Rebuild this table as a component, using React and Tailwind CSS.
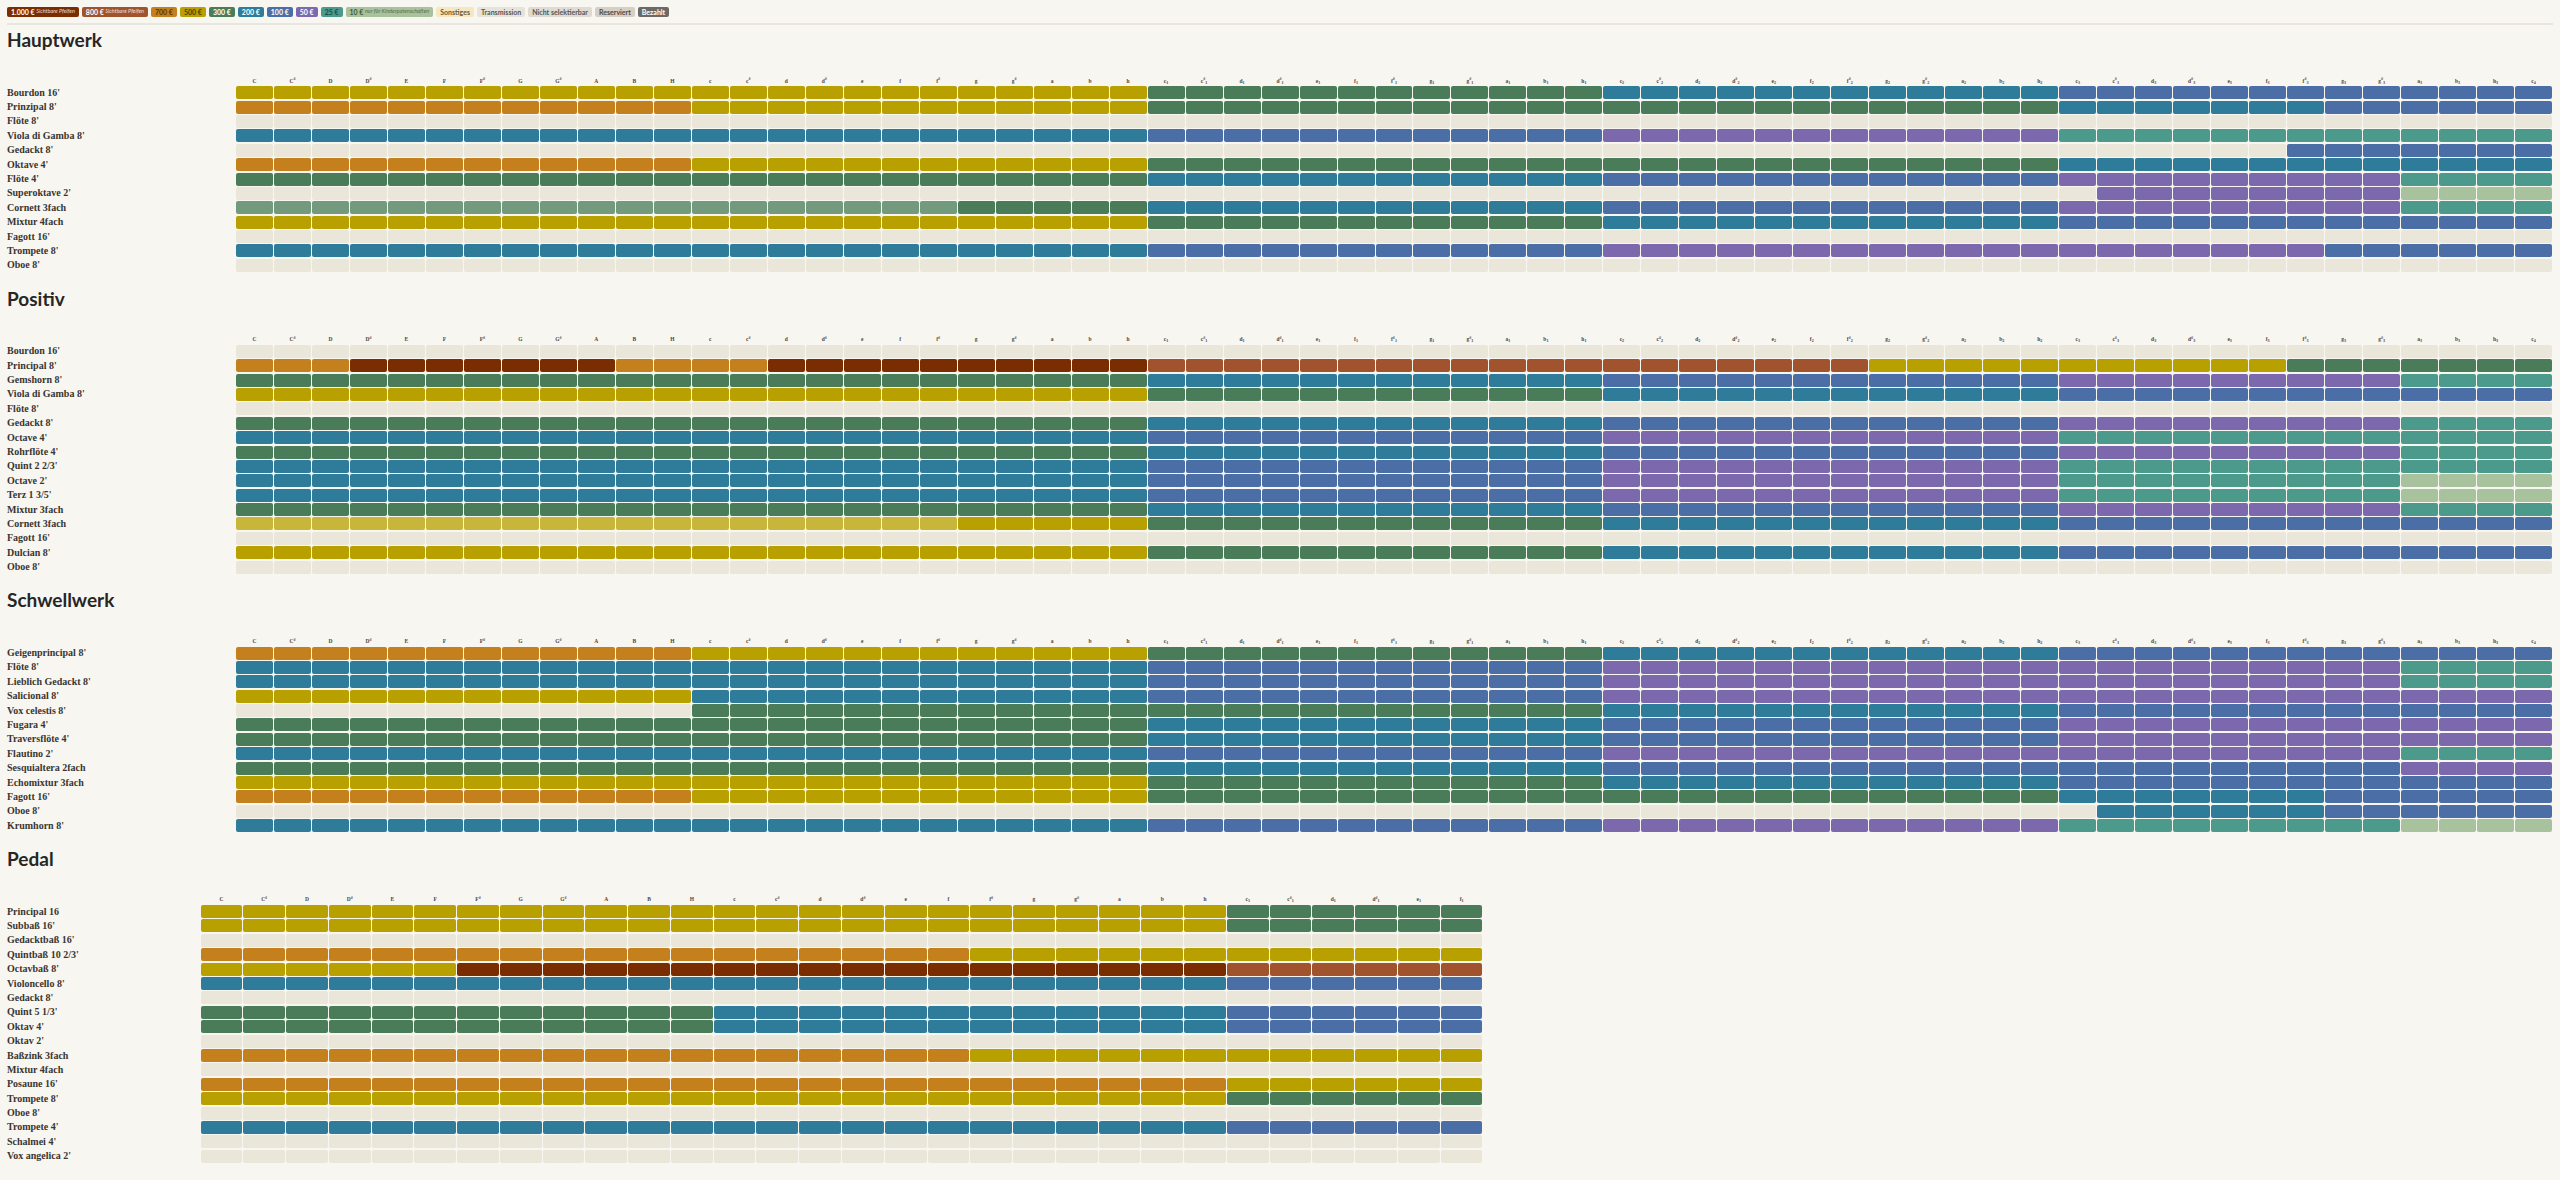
import React from "react";

// farben der patenschaften
const COLORS = {
  x: "bg-[#7b2d02]", // 1.000 €
  r: "bg-[#a0532d]", // 800 €
  o: "bg-[#c4801c]", // 700 €
  m: "bg-[#b8a000]", // 500 €
  g: "bg-[#4a7c59]", // 300 €
  t: "bg-[#2e7b9a]", // 200 €
  b: "bg-[#4a6ea5]", // 100 €
  p: "bg-[#7b68ad]", // 50 €
  q: "bg-[#4c9a8b]", // 25 €
  l: "bg-[#a8c29e]", // 10 €
  f: "bg-[#739a7c]", // 300 € reserviert
  y: "bg-[#c8b63b]", // 500 € reserviert
  e: "bg-[#eae6d9]", // nicht selektierbar
};

const LEGEND = [
  { amount: "1.000 €", note: "Sichtbare Pfeifen", cls: "bg-[#7b2d02] text-white" },
  { amount: "800 €", note: "Sichtbare Pfeifen", cls: "bg-[#a0532d] text-white" },
  { amount: "700 €", cls: "bg-[#c4801c] text-[#5a3608]" },
  { amount: "500 €", cls: "bg-[#b8a000] text-[#4a3f00]" },
  { amount: "300 €", cls: "bg-[#4a7c59] text-white" },
  { amount: "200 €", cls: "bg-[#2e7b9a] text-white" },
  { amount: "100 €", cls: "bg-[#4a6ea5] text-white" },
  { amount: "50 €", cls: "bg-[#7b68ad] text-white" },
  { amount: "25 €", cls: "bg-[#4c9a8b] text-[#1d4a40]" },
  { amount: "10 €", note: "nur für Kinderpatenschaften", cls: "bg-[#a8c29e] text-[#3e5a38]" },
  { amount: "Sonstiges", cls: "bg-[#f6e7c1] text-[#6b5a30]" },
  { amount: "Transmission", cls: "bg-[#e7e3da] text-[#5a564e]" },
  { amount: "Nicht selektierbar", cls: "bg-[#dfdbd2] text-[#5a564e]" },
  { amount: "Reserviert", cls: "bg-[#d5cfc6] text-[#4e4a44]" },
  { amount: "Bezahlt", cls: "bg-[#6d6a66] text-white" },
];

const NOTES = ["c", "c#", "d", "d#", "e", "f", "f#", "g", "g#", "a", "b", "h"];

function keyLabels(count) {
  const out = [];
  for (let i = 0; i < count; i++) {
    const oct = Math.floor(i / 12);
    const n = NOTES[i % 12];
    const base = oct === 0 ? n[0].toUpperCase() : n[0];
    out.push({ base, sharp: n.length > 1, sub: oct >= 2 ? oct - 1 : null });
  }
  return out;
}

// "o12 m12 g24" -> ["o", "o", ...]
function cells(runs) {
  const out = [];
  runs.split(" ").forEach((r) => {
    const c = r[0];
    const n = parseInt(r.slice(1), 10);
    for (let i = 0; i < n; i++) out.push(c);
  });
  return out;
}

const HAUPTWERK = [
  ["Bourdon 16'", "m24 g12 t12 b13"],
  ["Prinzipal 8'", "o12 m12 g24 t7 b6"],
  ["Flöte 8'", "e61"],
  ["Viola di Gamba 8'", "t24 b12 p12 q13"],
  ["Gedackt 8'", "e54 b7"],
  ["Oktave 4'", "o12 m12 g24 t13"],
  ["Flöte 4'", "g24 t12 b12 p9 q4"],
  ["Superoktave 2'", "e49 p8 l4"],
  ["Cornett 3fach", "f19 g5 t12 b12 p9 q4"],
  ["Mixtur 4fach", "m24 g12 t12 b13"],
  ["Fagott 16'", "e61"],
  ["Trompete 8'", "t24 b12 p19 b6"],
  ["Oboe 8'", "e61"],
];

const POSITIV = [
  ["Bourdon 16'", "e61"],
  ["Principal 8'", "o3 x7 o4 x10 r19 m11 g7"],
  ["Gemshorn 8'", "g24 t12 b12 p9 q4"],
  ["Viola di Gamba 8'", "m24 g12 t12 b13"],
  ["Flöte 8'", "e61"],
  ["Gedackt 8'", "g24 t12 b12 p9 q4"],
  ["Octave 4'", "t24 b12 p12 q13"],
  ["Rohrflöte 4'", "g24 t12 b12 p9 q4"],
  ["Quint 2 2/3'", "t24 b12 p12 q13"],
  ["Octave 2'", "t24 b12 p12 q9 l4"],
  ["Terz 1 3/5'", "t24 b12 p12 q9 l4"],
  ["Mixtur 3fach", "g24 t12 b12 p9 q4"],
  ["Cornett 3fach", "y19 m5 g12 t12 b13"],
  ["Fagott 16'", "e61"],
  ["Dulcian 8'", "m24 g12 t12 b13"],
  ["Oboe 8'", "e61"],
];

const SCHWELLWERK = [
  ["Geigenprincipal 8'", "o12 m12 g12 t12 b13"],
  ["Flöte 8'", "t24 b12 p21 q4"],
  ["Lieblich Gedackt 8'", "t24 b12 p21 q4"],
  ["Salicional 8'", "m12 t12 b12 p25"],
  ["Vox celestis 8'", "e12 g24 t12 b13"],
  ["Fugara 4'", "g24 t12 b12 p13"],
  ["Traversflöte 4'", "g24 t12 b12 p13"],
  ["Flautino 2'", "t24 b12 p21 q4"],
  ["Sesquialtera 2fach", "g24 t12 b21 p4"],
  ["Echomixtur 3fach", "m24 g12 t12 b13"],
  ["Fagott 16'", "o12 m12 g24 t7 b6"],
  ["Oboe 8'", "e49 t6 b6"],
  ["Krumhorn 8'", "t24 b12 p12 q9 l4"],
];

const PEDAL = [
  ["Principal 16", "m24 g6"],
  ["Subbaß 16'", "m24 g6"],
  ["Gedacktbaß 16'", "e30"],
  ["Quintbaß 10 2/3'", "o18 m12"],
  ["Octavbaß 8'", "m6 x18 r6"],
  ["Violoncello 8'", "t24 b6"],
  ["Gedackt 8'", "e30"],
  ["Quint 5 1/3'", "g12 t12 b6"],
  ["Oktav 4'", "g12 t12 b6"],
  ["Oktav 2'", "e30"],
  ["Baßzink 3fach", "o18 m12"],
  ["Mixtur 4fach", "e30"],
  ["Posaune 16'", "o24 m6"],
  ["Trompete 8'", "m24 g6"],
  ["Oboe 8'", "e30"],
  ["Trompete 4'", "t24 b6"],
  ["Schalmei 4'", "e30"],
  ["Vox angelica 2'", "e30"],
];

const serif = { fontFamily: '"Liberation Serif", "Times New Roman", serif' };

function Werk({ title, rows, keys, pedal, first }) {
  const labels = keyLabels(keys);
  const labelW = pedal ? "w-[193.5px]" : "w-[229px]";
  const gridW = pedal ? "w-[1282px]" : "w-[2316px]";
  const cols = pedal
    ? "grid-cols-[repeat(30,minmax(0,1fr))]"
    : "grid-cols-[repeat(61,minmax(0,1fr))]";
  return (
    <section className={first ? "mt-[3px]" : "mt-[14px]"}>
      <h2 className="h-[24px] text-[19px] leading-[24px] font-bold text-[#262626]">{title}</h2>
      <div className="mt-[24.5px] flex h-[9px]">
        <div className={labelW + " shrink-0"} />
        <div className={gridW + " grid gap-x-px " + cols} style={serif}>
          {labels.map((k, i) => (
            <div key={i} className="text-center text-[5.5px] leading-[9px] font-bold text-[#4a4640]">
              {k.base}
              {k.sharp && <sup>#</sup>}
              {k.sub !== null && <sub>{k.sub}</sub>}
            </div>
          ))}
        </div>
      </div>
      {rows.map(([name, runs]) => (
        <div key={name} className="flex h-[14.4px] items-center">
          <div
            className={labelW + " shrink-0 text-[10px] leading-[14px] font-bold text-[#3a3530]"}
            style={serif}
          >
            {name}
          </div>
          <div className={gridW + " grid gap-x-px " + cols}>
            {cells(runs).map((c, i) => (
              <div key={i} className={"h-[13px] rounded-[2px] " + COLORS[c]} />
            ))}
          </div>
        </div>
      ))}
    </section>
  );
}

export default function App() {
  return (
    <div
      className="min-h-screen bg-[#f7f6f1] px-[7px] pt-[7px] pb-[8px]"
      style={{ fontFamily: 'Lato, "Open Sans", sans-serif' }}
    >
      {/* Legende */}
      <div className="flex gap-[3px]">
        {LEGEND.map((l) => (
          <span
            key={l.amount}
            className={"flex h-[10px] items-center rounded-[2px] px-[4px] text-[7px] leading-none font-bold " + l.cls}
          >
            {l.amount}
            {l.note && <span className="ml-[1.5px] text-[5.5px] font-normal italic opacity-80">{l.note}</span>}
          </span>
        ))}
      </div>
      <div className="mt-[6px] h-[2px] bg-[#e9e6df]" />

      <Werk title="Hauptwerk" rows={HAUPTWERK} keys={61} first />
      <Werk title="Positiv" rows={POSITIV} keys={61} />
      <Werk title="Schwellwerk" rows={SCHWELLWERK} keys={61} />
      <Werk title="Pedal" rows={PEDAL} keys={30} pedal />
    </div>
  );
}
